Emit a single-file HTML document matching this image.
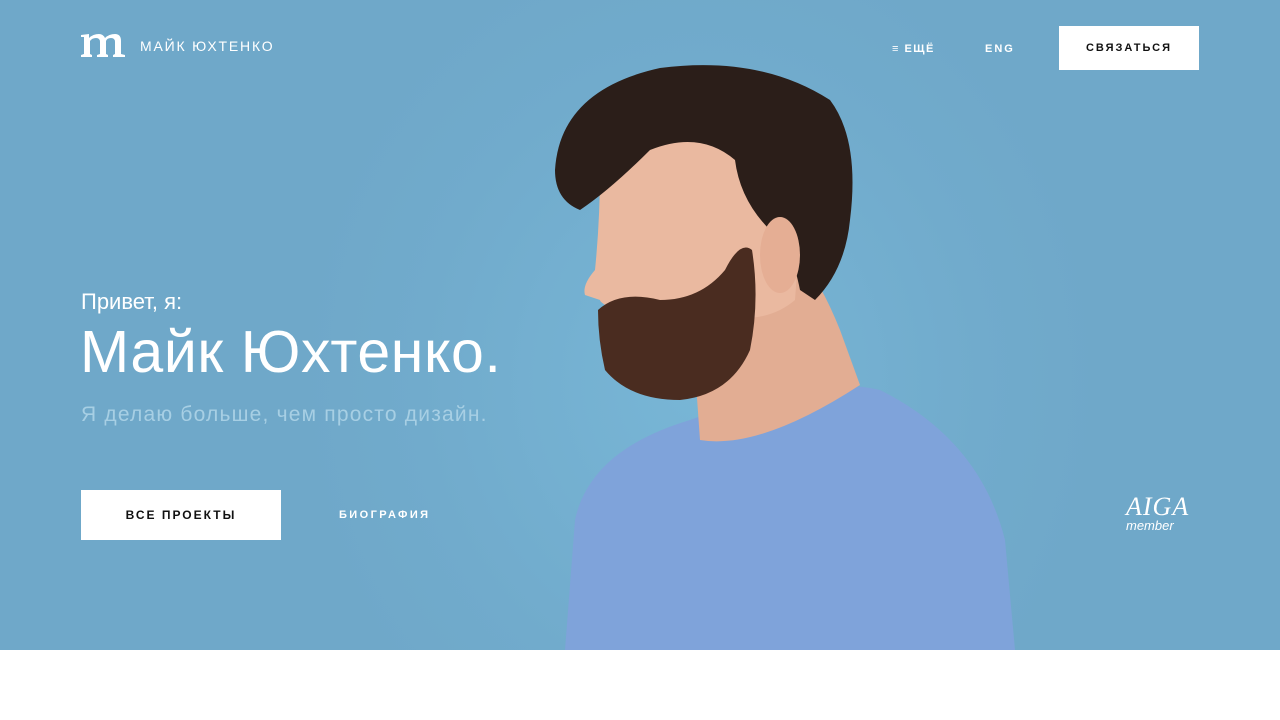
<!DOCTYPE html>
<html><head><meta charset="utf-8"><style>
body{margin:0;width:1280px;height:720px;background:#fff;font-family:"Liberation Sans",sans-serif;overflow:hidden;position:relative}
.hero{position:absolute;left:0;top:0;width:1280px;height:650px;background:radial-gradient(ellipse 400px 450px at 700px 380px,#78b6d6,#71abcc 70%,#6fa8c9);overflow:hidden}
.t{position:absolute;color:#fff;white-space:nowrap}
.btn{position:absolute;background:#fff;color:#111;font-size:12px;font-weight:bold;letter-spacing:2px;display:flex;align-items:center;justify-content:center}
</style></head><body>
<div class="hero">
<svg width="1280" height="650" style="position:absolute;left:0;top:0">
<path d="M565 650 L575 520 Q590 450 690 420 L760 395 Q840 380 880 390 Q980 440 1005 540 L1015 650 Z" fill="#7fa3da"/>
<path d="M690 300 L700 440 Q760 450 860 385 L840 330 Q820 280 800 260 Z" fill="#e2ad93"/>
<path d="M600 170 Q640 120 720 125 Q790 140 800 230 L795 300 Q760 330 700 310 L640 320 Q600 305 600 300 L585 295 Q582 285 595 270 Q600 220 600 170Z" fill="#eab9a0"/>
<path d="M598 310 Q620 290 660 300 Q700 300 725 270 Q740 240 752 250 Q760 300 750 350 Q730 395 680 400 Q630 400 605 370 Q598 340 598 310Z" fill="#4a2c20"/>
<path d="M555 170 Q560 90 660 68 Q760 55 830 100 Q860 140 850 220 Q845 270 815 300 L800 290 Q790 240 770 230 Q740 200 735 160 Q700 130 650 150 Q610 190 580 210 Q555 200 555 170Z" fill="#2b1e19"/>
<ellipse cx="780" cy="255" rx="20" ry="38" fill="#e5ae94"/>
</svg>
</div>
<svg style="position:absolute;left:81px;top:33px" width="44" height="24" viewBox="0 0 44 24"><path d="M0 2 L8 1 L8 5 Q12 1 18 1 Q22 1 24 5 Q28 1 34 1 Q40 1 40 8 L40 21 L44 22 L44 24 L32 24 L32 22 L34 21 L34 9 Q34 5 30 5 Q26 5 25 8 L25 21 L27 22 L27 24 L16 24 L16 22 L19 21 L19 9 Q19 5 15 5 Q11 5 9 8 L9 21 L11 22 L11 24 L0 24 L0 22 L3 21 L3 4 L0 4Z" fill="#fff"/></svg>
<div class="t" style="left:140px;top:38px;font-size:14px;letter-spacing:1.8px">МАЙК ЮХТЕНКО</div>
<div class="t" style="left:892px;top:43px;font-size:11px;font-weight:bold;letter-spacing:1.5px">≡ ЕЩЁ</div>
<div class="t" style="left:985px;top:43px;font-size:11px;font-weight:bold;letter-spacing:2px">ENG</div>
<div class="btn" style="left:1059px;top:26px;width:140px;height:44px;font-size:11px">СВЯЗАТЬСЯ</div>
<div class="t" style="left:81px;top:289px;font-size:22px">Привет, я:</div>
<div class="t" style="left:80px;top:318px;font-size:59px;letter-spacing:0.6px">Майк Юхтенко.</div>
<div class="t" style="left:81px;top:403px;font-size:21px;letter-spacing:1.2px;color:#a7cfe4">Я делаю больше, чем просто дизайн.</div>
<div class="btn" style="left:81px;top:490px;width:200px;height:50px">ВСЕ ПРОЕКТЫ</div>
<div class="t" style="left:339px;top:509px;font-size:11px;font-weight:bold;letter-spacing:2.4px">БИОГРАФИЯ</div>
<div class="t" style="left:1126px;top:492px;font-family:'Liberation Serif',serif;font-style:italic;font-size:26px;letter-spacing:1px">AIGA</div>
<div class="t" style="left:1126px;top:518px;font-style:italic;font-size:13px">member</div>
</body></html>
